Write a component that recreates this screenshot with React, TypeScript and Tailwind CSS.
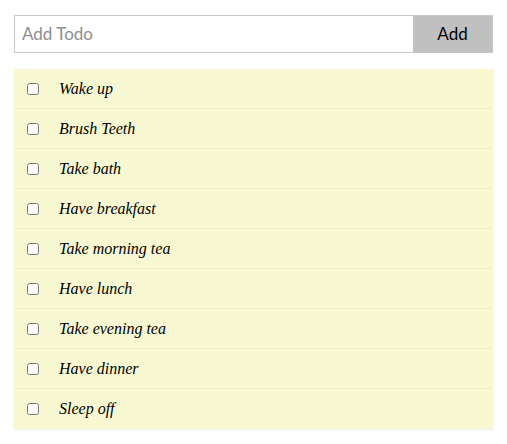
import React, { useState } from 'react';

const TODOS = [
  'Wake up',
  'Brush Teeth',
  'Take bath',
  'Have breakfast',
  'Take morning tea',
  'Have lunch',
  'Take evening tea',
  'Have dinner',
  'Sleep off',
];

const App: React.FC = () => {
  const [text, setText] = useState('');
  const [todos, setTodos] = useState<string[]>(TODOS);

  const addTodo = () => {
    if (!text.trim()) return;
    setTodos([...todos, text.trim()]);
    setText('');
  };

  return (
    <div className="min-h-screen bg-white px-[14px] pt-[15px]">
      <div className="flex h-[38px] border border-[#c8c8c8]">
        <input
          autoFocus
          value={text}
          onChange={(e) => setText(e.target.value)}
          placeholder="Add Todo"
          className="min-w-0 flex-1 bg-white px-[7px] text-[17px] text-black outline-none placeholder:text-[#8e8e8e] font-['Lato',sans-serif]"
        />
        <button
          onClick={addTodo}
          className="w-[79px] bg-[#c0c0c0] text-[17px] text-black font-['Lato',sans-serif]"
        >
          Add
        </button>
      </div>

      <ul className="mt-[16px] bg-[#f8f9d2] shadow-[0_1px_2px_rgba(0,0,0,0.08)]">
        {todos.map((todo, i) => (
          <li
            key={i}
            className="flex h-[40px] items-center border-b border-[#eeeec8] last:border-b-0"
          >
            <input type="checkbox" className="ml-[13px] h-[12px] w-[12px] accent-white" />
            <span className="ml-[20px] text-[16px] italic text-black font-['Liberation_Serif',serif]">
              {todo}
            </span>
          </li>
        ))}
      </ul>
    </div>
  );
};

export default App;
